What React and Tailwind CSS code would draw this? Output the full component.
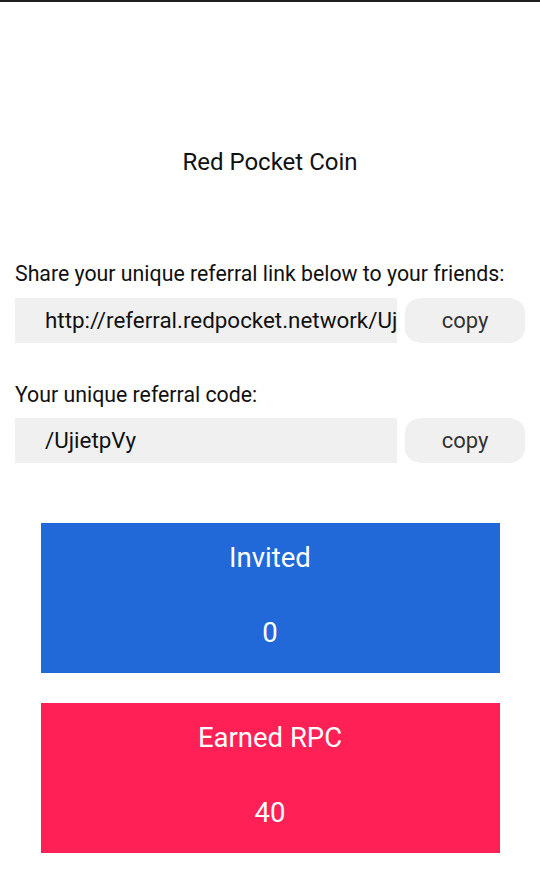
export default function App() {
  const font = { fontFamily: "Roboto, 'Noto Sans', sans-serif" };
  return (
    <div className="w-[540px] h-[879px] bg-white overflow-hidden" style={font}>
      <div className="h-[2px] bg-[#212121]" />
      <div className="h-[146px]" />
      <div className="h-[28px] flex items-center justify-center text-[24px] text-[#111]">
        Red Pocket Coin
      </div>
      <div className="h-[86px]" />
      <div className="px-[15px]">
        <div className="h-[24px] flex items-center text-[21.3px] text-[#111] whitespace-nowrap">
          Share your unique referral link below to your friends:
        </div>
        <div className="mt-[12px] flex items-center h-[45px]">
          <div className="w-[382px] h-[45px] bg-[#f0f0f0] flex items-center pl-[30px] overflow-hidden whitespace-nowrap text-[22.4px] text-[#111]">
            http://referral.redpocket.network/Uj
          </div>
          <div className="ml-[8px] w-[120px] h-[45px] bg-[#f0f0f0] rounded-[18px_/_14px] flex items-center justify-center text-[22px] text-[#333]">
            copy
          </div>
        </div>
        <div className="mt-[40px] h-[24px] flex items-center text-[21.3px] text-[#111] whitespace-nowrap">
          Your unique referral code:
        </div>
        <div className="mt-[11px] flex items-center h-[45px]">
          <div className="w-[382px] h-[45px] bg-[#f0f0f0] flex items-center pl-[30px] overflow-hidden whitespace-nowrap text-[22.4px] text-[#111]">
            /UjietpVy
          </div>
          <div className="ml-[8px] w-[120px] h-[45px] bg-[#f0f0f0] rounded-[18px_/_14px] flex items-center justify-center text-[22px] text-[#333]">
            copy
          </div>
        </div>
      </div>
      <div className="mt-[60px] flex flex-col items-center gap-[30px]">
        <div className="w-[459px] h-[150px] bg-[#2169d8] text-white flex flex-col items-center">
          <div className="mt-[20px] h-[30px] flex items-center text-[27.5px]">Invited</div>
          <div className="mt-[45px] h-[30px] flex items-center text-[27.5px]">0</div>
        </div>
        <div className="w-[459px] h-[150px] bg-[#ff2055] text-white flex flex-col items-center">
          <div className="mt-[20px] h-[30px] flex items-center text-[27.5px]">Earned RPC</div>
          <div className="mt-[45px] h-[30px] flex items-center text-[27.5px]">40</div>
        </div>
      </div>
    </div>
  );
}
